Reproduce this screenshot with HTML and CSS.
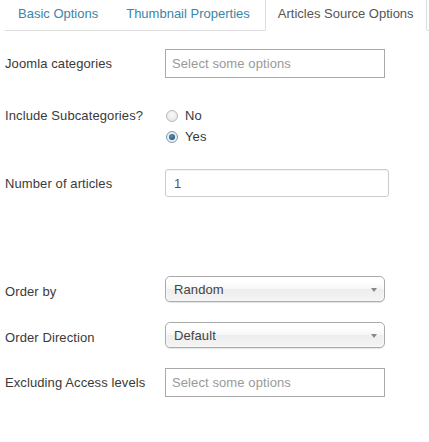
FILE: index.html
```html
<!DOCTYPE html>
<html>
<head>
<meta charset="utf-8">
<link rel="stylesheet" href="styles.css">
</head>
<body>
<ul class="tabs">
  <li class="tab"><a class="tab-link">Basic Options</a></li>
  <li class="tab"><a class="tab-link">Thumbnail Properties</a></li>
  <li class="tab active"><a class="tab-link">Articles Source Options</a></li>
</ul>
<div class="form">
  <div class="row row-cats">
    <label class="label">Joomla categories</label>
    <div class="multi"><span class="placeholder">Select some options</span></div>
  </div>
  <div class="row row-radios">
    <label class="label label-top">Include Subcategories?</label>
    <div class="radios">
      <div class="radio-line"><span class="radio"></span><span class="radio-text">No</span></div>
      <div class="radio-line"><span class="radio checked"></span><span class="radio-text">Yes</span></div>
    </div>
  </div>
  <div class="row row-num">
    <label class="label">Number of articles</label>
    <div class="text-input">1</div>
  </div>
  <div class="row row-order">
    <label class="label label-low">Order by</label>
    <div class="single"><span class="single-text">Random</span><span class="arrow"></span></div>
  </div>
  <div class="row row-dir">
    <label class="label label-low">Order Direction</label>
    <div class="single"><span class="single-text">Default</span><span class="arrow"></span></div>
  </div>
  <div class="row row-access">
    <label class="label">Excluding Access levels</label>
    <div class="multi"><span class="placeholder">Select some options</span></div>
  </div>
</div>
</body>
</html>
```

FILE: styles.css
```css
html, body {
  margin: 0;
  padding: 0;
  background: #fff;
}
body {
  font-family: "Liberation Sans", Arial, sans-serif;
  font-size: 13px;
  color: #3a3a3a;
}
.tabs {
  list-style: none;
  margin: 0 0 0 5px;
  padding: 0;
  display: flex;
  border-bottom: 1px solid #ddd;
  height: 30px;
  box-sizing: content-box;
}
.tab {
  margin-right: 2px;
  margin-bottom: -1px;
}
.tab-link {
  display: block;
  padding: 5px 12px 6px 12px;
  line-height: 18px;
  border: 1px solid transparent;
  border-top: 0;
  color: #3a86a8;
  white-space: nowrap;
}
.tab.active .tab-link {
  color: #555;
  background: #fff;
  border-color: #ddd;
  border-bottom-color: #fff;
  padding-bottom: 7px;
}
.form {
  padding: 18px 0 0 5px;
  letter-spacing: 0.1px;
}
.row {
  display: flex;
  align-items: center;
}
.label {
  width: 160px;
  flex: none;
}
.label-top {
  align-self: flex-start;
  line-height: 21px;
}
.label-low {
  padding-top: 5px;
}
.multi {
  height: 27px;
  border: 1px solid #aaa;
  display: flex;
  align-items: center;
  padding-left: 6px;
  box-sizing: content-box;
  width: 212px;
  background: #fff;
}
.placeholder {
  color: #999;
}
.row-radios {
  margin-top: 27px;
  align-items: flex-start;
}
.radios {
  display: flex;
  flex-direction: column;
}
.radio-line {
  display: flex;
  align-items: center;
  height: 21px;
}
.radio {
  width: 10px;
  height: 10px;
  border-radius: 50%;
  border: 1px solid #b9b9b9;
  background: radial-gradient(circle at 50% 40%, #fafafa 0%, #e2e2e2 100%);
  margin-left: 1px;
  margin-right: 7px;
  position: relative;
}
.radio.checked {
  border-color: #8c9aa6;
  background: #e6eef4;
}
.radio.checked::after {
  content: "";
  position: absolute;
  left: 2px;
  top: 2px;
  width: 6px;
  height: 6px;
  border-radius: 50%;
  background: radial-gradient(circle at 40% 35%, #5d8fb5 0%, #1f4d72 90%);
}
.row-num {
  margin-top: 22px;
}
.text-input {
  width: 214px;
  height: 26px;
  border: 1px solid #ccc;
  border-radius: 3px;
  padding-left: 8px;
  display: flex;
  align-items: center;
  color: #555;
  box-shadow: inset 0 1px 1px rgba(0,0,0,0.05);
}
.row-order {
  margin-top: 79px;
}
.row-dir {
  margin-top: 20px;
}
.row-access {
  margin-top: 20px;
}
.single {
  width: 210px;
  height: 24px;
  border: 1px solid #aaa;
  border-radius: 5px;
  padding-left: 8px;
  display: flex;
  align-items: center;
  justify-content: space-between;
  background: linear-gradient(#ffffff 20%, #f6f6f6 50%, #eeeeee 52%, #f4f4f4 100%);
  box-shadow: inset 0 0 3px #fff, 0 1px 1px rgba(0,0,0,0.1);
  color: #444;
}
.arrow {
  width: 0;
  height: 0;
  border-left: 3px solid transparent;
  border-right: 3px solid transparent;
  border-top: 4px solid #888;
  margin-right: 7px;
  margin-top: 1px;
}
```
